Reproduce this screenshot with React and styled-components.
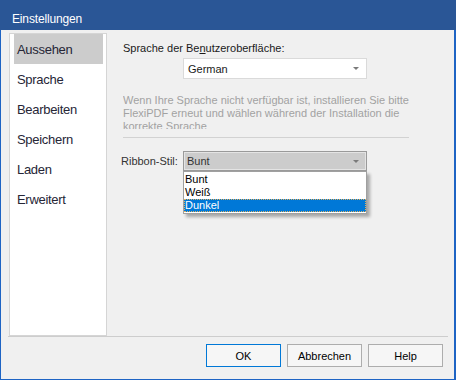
import React from 'react';
import styled, { createGlobalStyle } from 'styled-components';

const GlobalStyle = createGlobalStyle`
  html, body {
    margin: 0;
    padding: 0;
    background: #f0f0f0;
  }
  body {
    font-family: "Liberation Sans", Arial, sans-serif;
    font-size: 11px;
    color: #000;
  }
`;

const Window = styled.div`
  width: 456px;
  height: 380px;
  display: flex;
  flex-direction: column;
  background: #f0f0f0;
  overflow: hidden;
`;

const TitleBar = styled.div`
  height: 30px;
  flex: none;
  box-sizing: border-box;
  padding: 8px 0 0 12px;
  display: flex;
  align-items: center;
  background: #2a5696;
  color: #fff;
  font-size: 12px;
  letter-spacing: -0.15px;
`;

const Frame = styled.div`
  flex: 1;
  display: flex;
  flex-direction: column;
  border-left: 1px solid #1e64c4;
  border-right: 2px solid #1e64c4;
  border-bottom: 1px solid #1e64c4;
`;

const Main = styled.div`
  height: 303px;
  margin: 3px 6px 0 7px;
  display: flex;
  border-bottom: 1px solid #cdcdcd;
`;

const NavList = styled.div`
  width: 98px;
  margin-left: 1px;
  box-sizing: border-box;
  background: #fff;
  border: 1px solid #d5d5d5;
  padding: 0 3px 0 4px;
  display: flex;
  flex-direction: column;
`;

const NavItem = styled.div`
  height: 30px;
  display: flex;
  align-items: center;
  padding-left: 3px;
  font-size: 13px;
  letter-spacing: -0.3px;
  color: #262636;
  background: ${({ $active }) => ($active ? '#cccccc' : 'transparent')};
`;

const Panel = styled.div`
  flex: 1;
  padding: 8px 0 0 16px;
  display: flex;
  flex-direction: column;
  align-items: flex-start;
`;

const Label = styled.div`
  line-height: 14px;
  color: #1a1a1a;
`;

const ComboBox = styled.div`
  position: relative;
  width: 184px;
  height: ${({ $h }) => $h}px;
  box-sizing: border-box;
  margin-left: ${({ $indent }) => $indent}px;
  padding: 0 0 0 ${({ $pad }) => $pad}px;
  display: flex;
  align-items: center;
  justify-content: space-between;
  background: ${({ $disabled }) => ($disabled ? '#cccccc' : '#fff')};
  border: 1px solid ${({ $disabled }) => ($disabled ? '#9a9a9a' : '#dadada')};
  box-shadow: ${({ $disabled }) => ($disabled ? 'inset 0 0 0 1px #e4e4e4' : 'none')};
  color: ${({ $disabled }) => ($disabled ? '#333' : '#1a1a1a')};
`;

const Arrow = styled.span`
  width: 0;
  height: 0;
  margin-right: 7px;
  border-left: 3px solid transparent;
  border-right: 3px solid transparent;
  border-top: 3px solid #7a7a7a;
`;

const Hint = styled.p`
  margin: 15px 0 0 0;
  width: 286px;
  height: 35px;
  overflow: hidden;
  line-height: 13px;
  color: #a2a2a2;
`;

const Divider = styled.div`
  width: 286px;
  height: 1px;
  margin-top: 8px;
  background: #d2d2d2;
`;

const StyleRow = styled.div`
  margin: 13px 0 0 -2px;
  display: flex;
  align-items: center;
`;

const RowLabel = styled.div`
  width: 62px;
  color: #333;
`;

const DropList = styled.div`
  position: absolute;
  top: 19px;
  left: -1px;
  width: 184px;
  box-sizing: border-box;
  padding: 1px 0 1px;
  background: #fff;
  border: 1px solid #a0a0a0;
  box-shadow: 3px 3px 3px rgba(0, 0, 0, 0.3);
  z-index: 2;
`;

const DropItem = styled.div`
  height: 13px;
  line-height: 13px;
  box-sizing: border-box;
  padding-left: 1px;
  color: ${({ $selected }) => ($selected ? '#fff' : '#000')};
  background: ${({ $selected }) => ($selected ? '#0078d7' : 'transparent')};
  outline: ${({ $selected }) => ($selected ? '1px dotted #e0b060' : 'none')};
  outline-offset: -1px;
`;

const Footer = styled.div`
  flex: 1;
  display: flex;
  justify-content: flex-end;
  align-items: flex-start;
  gap: 6px;
  padding: 7px 11px 0 0;
`;

const Button = styled.button`
  width: 75px;
  height: 23px;
  margin: 0;
  padding: 0;
  font-family: inherit;
  font-size: 11px;
  color: #000;
  background: #f6f6f6;
  border: 1px solid ${({ $primary }) => ($primary ? '#0078d7' : '#adadad')};
  border-radius: 0;
`;

const navItems = ['Aussehen', 'Sprache', 'Bearbeiten', 'Speichern', 'Laden', 'Erweitert'];
const ribbonStyles = ['Bunt', 'Weiß', 'Dunkel'];

export default function App() {
  return (
    <>
      <GlobalStyle />
      <Window>
        <TitleBar>Einstellungen</TitleBar>
        <Frame>
          <Main>
            <NavList>
              {navItems.map((item, i) => (
                <NavItem key={item} $active={i === 0}>{item}</NavItem>
              ))}
            </NavList>
            <Panel>
              <Label>
                Sprache der Be<u>n</u>utzeroberfläche:
              </Label>
              <ComboBox $h={21} $indent={60} $pad={4} style={{ marginTop: 3 }}>
                German
                <Arrow />
              </ComboBox>
              <Hint>
                Wenn Ihre Sprache nicht verfügbar ist, installieren Sie bitte FlexiPDF
                erneut und wählen während der Installation die korrekte Sprache
              </Hint>
              <Divider />
              <StyleRow>
                <RowLabel>Ribbon-Stil:</RowLabel>
                <ComboBox $h={20} $indent={0} $pad={3} $disabled>
                  Bunt
                  <Arrow />
                  <DropList>
                    {ribbonStyles.map((s, i) => (
                      <DropItem key={s} $selected={i === 2}>{s}</DropItem>
                    ))}
                  </DropList>
                </ComboBox>
              </StyleRow>
            </Panel>
          </Main>
          <Footer>
            <Button $primary>OK</Button>
            <Button>Abbrechen</Button>
            <Button>Help</Button>
          </Footer>
        </Frame>
      </Window>
    </>
  );
}
